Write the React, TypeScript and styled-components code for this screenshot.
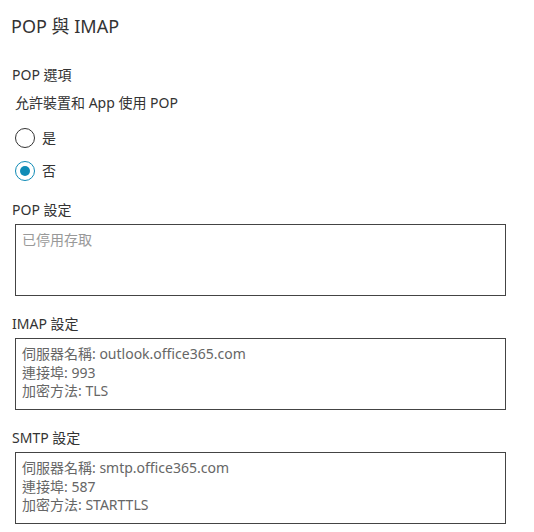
import React from "react";
import styled, { createGlobalStyle } from "styled-components";

const GlobalStyle = createGlobalStyle`
  body {
    margin: 0;
    background: #fff;
    font-family: "Noto Sans", "Noto Sans CJK TC", sans-serif;
    color: #333;
  }
`;

interface ServerSetting {
  title: string;
  lines: string[];
  placeholder?: string;
}

const settings: ServerSetting[] = [
  { title: "POP 設定", lines: [], placeholder: "已停用存取" },
  {
    title: "IMAP 設定",
    lines: ["伺服器名稱: outlook.office365.com", "連接埠: 993", "加密方法: TLS"],
  },
  {
    title: "SMTP 設定",
    lines: ["伺服器名稱: smtp.office365.com", "連接埠: 587", "加密方法: STARTTLS"],
  },
];

const App: React.FC = () => {
  return (
    <Page>
      <GlobalStyle />
      <Title>POP 與 IMAP</Title>
      <SectionLabel>POP 選項</SectionLabel>
      <Description>允許裝置和 App 使用 POP</Description>
      <RadioGroup>
        <RadioRow>
          <RadioCircle checked={false} />
          <RadioText>是</RadioText>
        </RadioRow>
        <RadioRow>
          <RadioCircle checked={true} />
          <RadioText>否</RadioText>
        </RadioRow>
      </RadioGroup>
      {settings.map((s, i) => (
        <Setting key={s.title} first={i === 0}>
          <SectionLabel>{s.title}</SectionLabel>
          <InfoBox>
            {s.placeholder && <Placeholder>{s.placeholder}</Placeholder>}
            {s.lines.map((line) => (
              <InfoLine key={line}>{line}</InfoLine>
            ))}
          </InfoBox>
        </Setting>
      ))}
    </Page>
  );
};

export default App;

const Page = styled.div`
  display: flex;
  flex-direction: column;
  padding: 14px 0 0 11px;
`;

const Title = styled.h1`
  margin: 0;
  font-size: 18px;
  line-height: 24px;
  font-weight: 400;
  color: #333;
`;

const SectionLabel = styled.div`
  margin-top: 27px;
  padding-left: 1px;
  font-size: 14px;
  line-height: 20px;
  color: #333;
`;

const Description = styled.div`
  margin-top: 8px;
  padding-left: 4px;
  font-size: 14px;
  line-height: 20px;
  color: #333;
`;

const RadioGroup = styled.div`
  display: flex;
  flex-direction: column;
  gap: 9px;
  margin-top: 13px;
  padding-left: 4px;
`;

const RadioRow = styled.label`
  display: flex;
  align-items: center;
  gap: 7px;
  height: 24px;
`;

const RadioCircle = styled.span<{ checked: boolean }>`
  position: relative;
  box-sizing: border-box;
  width: 20px;
  height: 20px;
  border-radius: 50%;
  border: 1px solid ${({ checked }) => (checked ? "#0f8bb6" : "#333")};
  ${({ checked }) =>
    checked &&
    `
    &::after {
      content: "";
      position: absolute;
      left: 4px;
      top: 4px;
      width: 10px;
      height: 10px;
      border-radius: 50%;
      background: #0f8bb6;
    }
  `}
`;

const RadioText = styled.span`
  font-size: 14px;
  line-height: 20px;
  color: #333;
`;

const Setting = styled.div<{ first: boolean }>`
  display: flex;
  flex-direction: column;
  margin-top: ${({ first }) => (first ? "-10px" : "-9px")};

  & > ${SectionLabel} {
    margin-top: 27px;
  }
`;

const InfoBox = styled.div`
  box-sizing: border-box;
  width: 491px;
  height: 72px;
  margin-top: 4px;
  margin-left: 4px;
  padding: 6px 6px;
  border: 1px solid #444;
  display: flex;
  flex-direction: column;
`;

const InfoLine = styled.div`
  font-size: 14px;
  line-height: 18.5px;
  color: #666;
`;

const Placeholder = styled(InfoLine)`
  color: #999;
`;
